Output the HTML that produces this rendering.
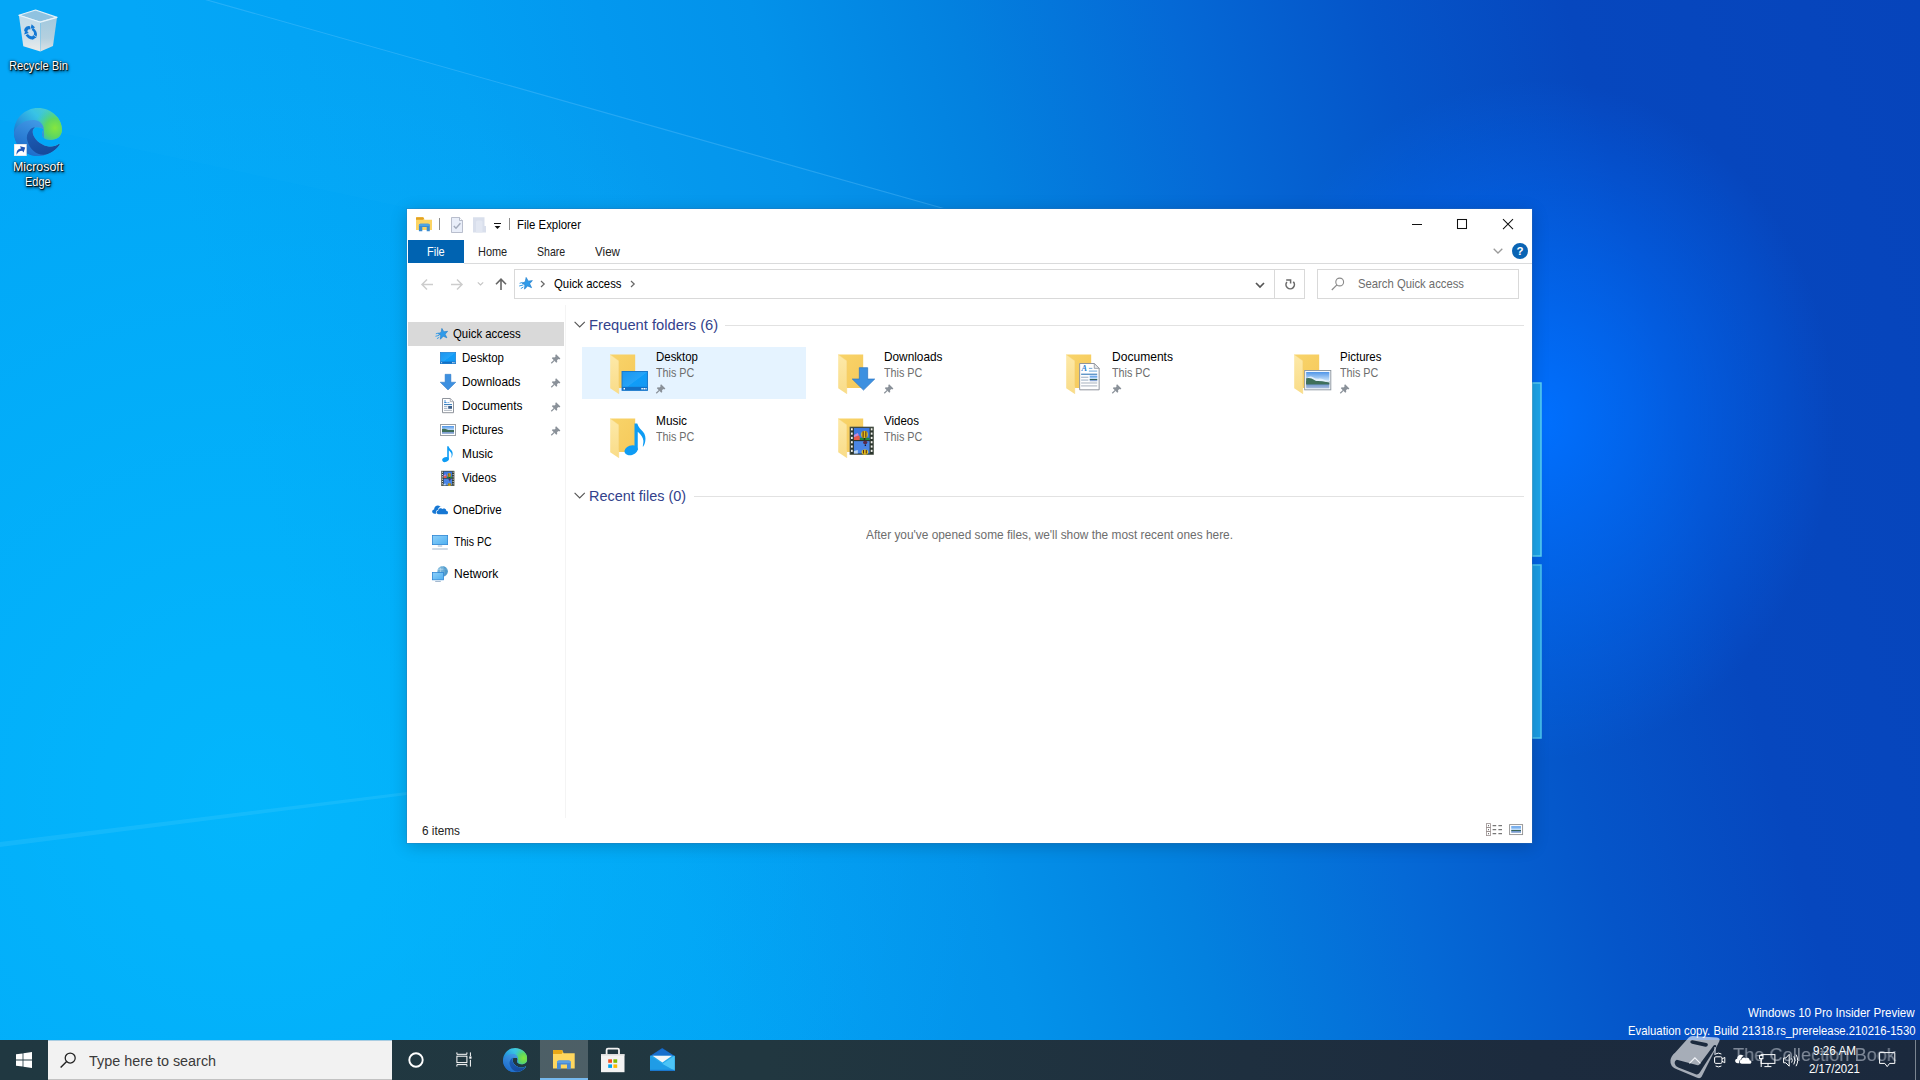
<!DOCTYPE html>
<html><head><meta charset="utf-8"><title>File Explorer</title>
<style>
html,body{margin:0;padding:0;width:1920px;height:1080px;overflow:hidden;background:#0378e0;font-family:"Liberation Sans",sans-serif;}
.a{position:absolute}
.t{position:absolute;white-space:pre;transform-origin:0 0;font-family:"Liberation Sans",sans-serif;}
svg{position:absolute;overflow:visible}
</style></head><body>
<div class=a id=wall style="left:0;top:0;width:1920px;height:1080px;
background:
 radial-gradient(ellipse 300px 340px at 1535px 420px, rgba(0,112,255,1), rgba(0,112,255,0) 100%),
 radial-gradient(ellipse 760px 760px at 250px 800px, rgba(4,192,255,.62), rgba(4,192,255,0) 100%),
 linear-gradient(75deg, #02a6f7 0%, #02a6f7 19%, #02a0f3 33%, #0398ef 40%, #0392ea 47%, #0381df 56%, #0569d6 66%, #0555c9 75%, #0647be 84%, #0644bb 100%);"></div>
<svg style="left:0;top:0" width="1920" height="1080"><polygon points="205,0 209,0 944,208 940,208" fill="rgba(120,205,255,.30)"/><polygon points="207,0 942,208 407,208 0,120 0,0" fill="rgba(60,190,255,.05)"/>
<polygon points="0,842 407,792 407,795 0,847" fill="rgba(150,230,255,.12)"/>
<rect x="1532" y="383" width="9" height="173" fill="#1da6ec" stroke="#59d0f5" stroke-width="1.5"/>
<rect x="1532" y="565" width="9" height="173" fill="#1b9fe8" stroke="#4cc6f2" stroke-width="1.5"/>
</svg>

<svg width="0" height="0" style="left:0;top:0"><defs>
 <linearGradient id="eBase" x1="0.1" y1="0.9" x2="0.9" y2="0.1"><stop offset="0" stop-color="#1560c0"/><stop offset=".45" stop-color="#2a9fe0"/><stop offset=".7" stop-color="#38c3e6"/><stop offset="1" stop-color="#4fd0c0"/></linearGradient>
 <radialGradient id="eGreen" cx="41" cy="20" r="21" gradientUnits="userSpaceOnUse"><stop offset="0" stop-color="#86e63e"/><stop offset=".45" stop-color="#5fd85a" stop-opacity=".95"/><stop offset="1" stop-color="#3fcf9a" stop-opacity="0"/></radialGradient>
 <linearGradient id="eMid" x1="0.6" y1="0" x2="0.2" y2="1"><stop offset="0" stop-color="#3f97e4"/><stop offset="1" stop-color="#1663c4"/></linearGradient>
 <linearGradient id="eDark" x1="0.2" y1="0" x2="0.6" y2="1"><stop offset="0" stop-color="#1d5fb8"/><stop offset="1" stop-color="#16499a"/></linearGradient>
 <clipPath id="eClip"><path d="M24,0 C37.5,0 48,10.5 48,21.5 C48,28.5 42.5,32 36.5,32 C31,32 28,29 28,26.5 C28,24 29.5,23 29,21 C28,19.5 24,19 21,19.5 C18.5,21 18,24 19.5,27.5 C22,33 28,37.5 35,38.5 C39,39 42.5,37.5 44.5,36 C45.5,35.5 46,36.5 45.3,37.3 C41,43.5 33,48 24,48 C10.7,48 0,37.3 0,24 C0,10.7 10.7,0 24,0 Z"/></clipPath>
 <symbol id="edge" viewBox="0 0 48 48" overflow="visible">
  <g clip-path="url(#eClip)">
   <rect x="0" y="0" width="48" height="48" fill="url(#eBase)"/>
   <rect x="0" y="0" width="48" height="48" fill="url(#eGreen)"/>
   <path d="M-1,29 C0,18 9,12 19.5,12 C25,12 29.8,16 29.8,21.5 L30,50 L-1,50 Z" fill="url(#eMid)"/>
   <path d="M16.4,21.2 C13,25 12,29 13.4,33 C15.5,41 22,47 30,46.8 C36,46.5 42,42 45.6,37.3 L47,35 L44.5,36 C42.5,37.5 39,39 35,38.5 C28,37.5 22,33 19.5,27.5 C18,24 18.5,21 21,19.5 C19.5,19.3 17.5,20 16.4,21.2 Z" fill="url(#eDark)"/>
  </g>
 </symbol>
 <linearGradient id="rbL" x1="0" y1="0" x2="0" y2="1"><stop offset="0" stop-color="#c3dcea"/><stop offset=".6" stop-color="#cfe0ea"/><stop offset="1" stop-color="#ebebea"/></linearGradient>
 <linearGradient id="rbR" x1="0" y1="0" x2="0" y2="1"><stop offset="0" stop-color="#a3c9de"/><stop offset=".6" stop-color="#b4d0df"/><stop offset="1" stop-color="#dde2e4"/></linearGradient>
</defs></svg>
<!-- recycle bin -->
<svg style="left:18px;top:9px" width="40" height="44" viewBox="18 9 40 44">
 <path d="M18.9,15.2 L35.6,10 L57,17.4 L40.4,22.2 Z" fill="#8fc2e0" stroke="#e4f1f8" stroke-width="1.2" stroke-linejoin="round"/>
 <path d="M18.9,15.4 L40.4,22.4 L40.4,51.5 L23.3,46.3 Z" fill="url(#rbL)"/>
 <path d="M40.4,22.4 L57,17.6 L53,45.9 L40.4,51.5 Z" fill="url(#rbR)"/>
 <path d="M18.9,15.2 L40.4,22.2 L57,17.4" fill="none" stroke="#eaf4fa" stroke-width="1.2"/>
 <g transform="translate(30.6 32.8) skewY(17)" fill="none" stroke="#1378d4" stroke-width="3.1">
  <circle r="4.9" stroke-dasharray="7.4 2.86" transform="rotate(-70)"/>
 </g>
 <g fill="#1378d4"><path d="M31.6,24.2 L35.2,27.6 L30.6,28.8Z"/><path d="M24.2,34.6 L25.6,29.8 L28.8,33Z"/><path d="M36.6,37.6 L32,39.6 L33,35Z"/></g>

</svg>
<!-- edge -->
<svg style="left:14px;top:108px" width="48" height="48"><use href="#edge" width="48" height="48"/></svg>
<svg style="left:14px;top:143.5px" width="12.5" height="12" viewBox="0 0 12.5 12">
 <rect x="0" y="0" width="12.5" height="12" fill="#fff"/><rect x=".3" y=".3" width="11.9" height="11.4" fill="none" stroke="#d5dde6" stroke-width=".6"/>
 <path d="M2.6,10.8 C2.2,6.6 4.2,4.6 7,4.4 L6,2.2 L11.2,3.4 L9.6,8.6 L8.2,6.8 C5.6,7 3.8,8.2 2.6,10.8Z" fill="#2457b8"/>
</svg>

<div class=a style="left:407px;top:209px;width:1125px;height:634px;background:#fff;box-shadow:0 0 0 1px rgba(60,110,170,.28),0 3px 16px rgba(0,0,0,.20)"></div>
<div class=a style="left:408px;top:240px;width:56px;height:23px;background:#0063b1"></div>
<div class=a style="left:464px;top:263px;width:1068px;height:1px;background:#dadbdc"></div>
<div class=a style="left:514px;top:269px;width:791px;height:30px;border:1px solid #d9d9d9;box-sizing:border-box"></div>
<div class=a style="left:1274px;top:270px;width:1px;height:28px;background:#d9d9d9"></div>
<div class=a style="left:1317px;top:269px;width:202px;height:30px;border:1px solid #d9d9d9;box-sizing:border-box"></div>
<div class=a style="left:408px;top:322px;width:156px;height:23.5px;background:#d9d9d9"></div>
<div class=a style="left:565px;top:305px;width:1px;height:513px;background:#f4f4f4"></div>
<div class=a style="left:582px;top:347px;width:224px;height:52px;background:#e5f3ff"></div>
<div class=a style="left:725px;top:325px;width:799px;height:1px;background:#e2e2e2"></div>
<div class=a style="left:694px;top:496px;width:830px;height:1px;background:#e2e2e2"></div>

<!-- title bar icons -->
<svg style="left:416px;top:217px" width="17" height="15" viewBox="0 0 17 15">
 <path d="M0,1 L0,13 L16,13 L16,2.7 L8.6,2.7 L7.4,0.2 L0.6,0.2 Z" fill="#fcd463"/>
 <path d="M0,0.8 Q0,0.2 .6,.2 L7,.2 L8.2,1.5 L7,2.8 L0,2.8 Z" fill="#e3a221"/>
 <path d="M2.9,14.2 L2.9,8.3 Q2.9,6.8 4.4,6.8 L12.3,6.8 Q13.8,6.8 13.8,8.3 L13.8,14.2 L10.7,14.2 L10.7,10 L6.3,10 L6.3,14.2 Z" fill="#3b8bd0"/>
 <path d="M2.9,8.3 Q2.9,6.8 4.4,6.8 L12.3,6.8 Q13.8,6.8 13.8,8.3 L13.8,9 L2.9,9Z" fill="#4fa3e3"/>
</svg>
<div class=a style="left:439px;top:218px;width:1px;height:12px;background:#8c8c8c"></div>
<svg style="left:451px;top:217px" width="13" height="16" viewBox="0 0 13 16">
 <path d="M.5,.5 L8.5,.5 L11.5,3.5 L11.5,15.5 L.5,15.5 Z" fill="#e9eef9" stroke="#a9b0c0" stroke-width=".8"/>
 <path d="M8.5,.5 L8.5,3.5 L11.5,3.5" fill="#fff" stroke="#a3abbc" stroke-width=".8"/>
 <path d="M2.8,9 L5,11.3 L9.4,6.2" fill="none" stroke="#a3abbc" stroke-width="1.4"/>
</svg>
<svg style="left:473px;top:217px" width="14" height="16" viewBox="0 0 14 16">
 <path d="M0,.3 L11.5,.3 L11.5,9 L13,9 L13,15.6 L0,15.6 Z" fill="#d9dfec"/>
 <path d="M3,15.6 L3,5 Q3,3.5 4.5,3.5 L8,3.5 Q9.5,3.5 9.5,5 L9.5,15.6" fill="#e2e7f2"/>
</svg>
<svg style="left:494px;top:223px" width="8" height="7" viewBox="0 0 8 7"><rect x="0" y="0" width="7" height="1" fill="#111"/><path d="M.6,3 L6.4,3 L3.5,6 Z" fill="#111"/></svg>
<div class=a style="left:509px;top:218px;width:1px;height:12px;background:#8c8c8c"></div>
<!-- window controls -->
<svg style="left:1412px;top:219px" width="102" height="11" viewBox="0 0 102 11" fill="none" stroke="#111" stroke-width="1.05">
 <path d="M0,5.5 L10,5.5"/>
 <rect x="45.5" y=".5" width="9" height="9"/>
 <path d="M91,.2 L101,10.2 M101,.2 L91,10.2"/>
</svg>
<!-- ribbon right -->
<svg style="left:1493px;top:248px" width="10" height="6" viewBox="0 0 10 6"><path d="M.7,.7 L5,5 L9.3,.7" fill="none" stroke="#9a9a9a" stroke-width="1.3"/></svg>
<svg style="left:1512px;top:243px" width="16" height="16" viewBox="0 0 16 16"><circle cx="8" cy="8" r="8" fill="#0a64b4"/><text x="8" y="12.2" text-anchor="middle" font-family="Liberation Sans" font-weight="700" font-size="11.5" fill="#fff">?</text></svg>
<!-- nav arrows -->
<svg style="left:421px;top:278px" width="90" height="13" viewBox="0 0 90 13" fill="none" stroke-width="1.3">
 <path d="M6,1.5 L1,6.5 L6,11.5 M1,6.5 L12,6.5" stroke="#cdcdcd" stroke-width="1.5"/>
 <path d="M36,1.5 L41,6.5 L36,11.5 M41,6.5 L30,6.5" stroke="#cdcdcd" stroke-width="1.5"/>
 <path d="M56.8,4.3 L59.5,7 L62.2,4.3" stroke="#c4c4c4" stroke-width="1.1"/>
 <path d="M75,6.2 L80,1.2 L85,6.2 M80,1.2 L80,12" stroke="#666" stroke-width="1.6"/>
</svg>
<!-- address bar -->
<svg style="left:519px;top:277px" width="14" height="13" viewBox="0 0 14 13" id="star1">
 <path transform="rotate(-10 8.5 6.5)" d="M8.2,.3 L9.7,4.3 L13.8,4.5 L10.6,7.1 L11.8,11.3 L8.2,8.9 L4.6,11.6 L5.7,7.3 L3.2,5.2 L6.6,4.4 Z" fill="#2f9bea" stroke="#1a78c9" stroke-width=".6"/>
 <path d="M.6,6.3 L3.6,5.4 M.2,9 L4.4,7.9 M1.8,11.6 L4.4,10" stroke="#2f9bea" stroke-width="1" fill="none"/>
</svg>
<svg style="left:540px;top:280px" width="6" height="8" viewBox="0 0 6 8"><path d="M1,1 L4.2,4 L1,7" fill="none" stroke="#666" stroke-width="1.2"/></svg>
<svg style="left:630px;top:280px" width="6" height="8" viewBox="0 0 6 8"><path d="M1,1 L4.2,4 L1,7" fill="none" stroke="#666" stroke-width="1.2"/></svg>
<svg style="left:1255px;top:282px" width="10" height="7" viewBox="0 0 10 7"><path d="M1,1 L5,5 L9,1" fill="none" stroke="#555" stroke-width="1.7"/></svg>
<svg style="left:1284px;top:278px" width="12" height="13" viewBox="0 0 12 13"><path d="M9.3,3.8 A4.2,4.2 0 1 1 2.9,4.0" fill="none" stroke="#6a6a6a" stroke-width="1.6"/><path d="M2.2,2.1 L6.6,2.1 L6.6,5.6" fill="none" stroke="#6a6a6a" stroke-width="1.5"/></svg>
<svg style="left:1331px;top:277px" width="14" height="14" viewBox="0 0 14 14"><circle cx="8.7" cy="5" r="3.9" fill="none" stroke="#8a8a8a" stroke-width="1.1"/><path d="M5.9,7.9 L.8,13" stroke="#8a8a8a" stroke-width="1.2"/></svg>
<!-- section chevrons -->
<svg style="left:574px;top:321px" width="12" height="8" viewBox="0 0 12 8"><path d="M.6,.8 L5.7,6 L10.8,.8" fill="none" stroke="#555" stroke-width="1.1"/></svg>
<svg style="left:574px;top:492px" width="12" height="8" viewBox="0 0 12 8"><path d="M.6,.8 L5.7,6 L10.8,.8" fill="none" stroke="#555" stroke-width="1.1"/></svg>
<!-- defs -->
<svg width="0" height="0" style="left:0;top:0">
 <defs>
  <linearGradient id="gFolderBack" x1="0" y1="0" x2="1" y2="1"><stop offset="0" stop-color="#f8d46a"/><stop offset="1" stop-color="#f6c95b"/></linearGradient>
  <linearGradient id="gFolderFlap" x1="0" y1="0" x2="0" y2="1"><stop offset="0" stop-color="#fde9a8"/><stop offset="1" stop-color="#f9dc88"/></linearGradient>
  <linearGradient id="gDesk" x1="0" y1="0" x2="1" y2="1"><stop offset="0" stop-color="#1c95ee"/><stop offset=".5" stop-color="#25a4f8"/><stop offset=".52" stop-color="#0f9df8"/><stop offset="1" stop-color="#1896f0"/></linearGradient>
  <linearGradient id="gSky" x1="0" y1="0" x2="0" y2="1"><stop offset="0" stop-color="#4f95e8"/><stop offset=".55" stop-color="#cfe6fa"/><stop offset=".56" stop-color="#3e6e5c"/><stop offset=".72" stop-color="#2f5a55"/><stop offset=".74" stop-color="#6f95cf"/><stop offset="1" stop-color="#a9bddb"/></linearGradient>
  <linearGradient id="gMon" x1="0" y1="0" x2="1" y2="1"><stop offset="0" stop-color="#8ed0fa"/><stop offset="1" stop-color="#4fb0f0"/></linearGradient>
  <symbol id="folder" viewBox="0 0 40 41" overflow="visible">
   <path d="M.4,.4 L25.2,.4 L25.2,34 L8.7,34 Z" fill="url(#gFolderBack)"/>
   <path d="M.2,.5 L8.8,6.8 L8.8,39.9 L.2,34.2 Z" fill="url(#gFolderFlap)"/>
   <path d="M.2,.5 L8.8,6.8 L8.8,39.9" fill="none" stroke="#f3d27c" stroke-width=".5" opacity=".7"/>
  </symbol>
  <symbol id="pin" viewBox="0 0 10 10" overflow="visible">
   <path d="M5.3,.2 L9.8,4.7 L8.6,5.6 L7.6,5.1 L6.3,6.4 L6.5,8.3 L5.5,9.1 L.9,4.5 L1.7,3.5 L3.6,3.7 L4.9,2.4 L4.4,1.4 Z" fill="#8a9199"/>
   <path d="M3.4,6.6 L.3,9.7" stroke="#8a9199" stroke-width="1.3"/>
  </symbol>
  <symbol id="deskico" viewBox="0 0 16 12" overflow="visible">
   <rect x=".3" y=".3" width="15.4" height="11.4" fill="url(#gDesk)" stroke="#1878cc" stroke-width=".6"/>
   <rect x=".3" y="9.6" width="15.4" height="2.1" fill="#126fc4"/>
   <rect x="1.2" y="10.3" width=".9" height=".9" fill="#fff"/><rect x="12" y="10.3" width=".9" height=".9" fill="#fff"/><rect x="13.3" y="10.3" width=".9" height=".9" fill="#fff"/><rect x="14.5" y="10.3" width=".7" height=".9" fill="#fff"/>
  </symbol>
  <symbol id="dlarrow" viewBox="0 0 16 16" overflow="visible">
   <path d="M5.1,.3 L10.9,.3 L10.9,8.2 L15.8,8.2 L8,15.9 L.2,8.2 L5.1,8.2 Z" fill="#3d90e0" stroke="#2b77c4" stroke-width=".5"/>
  </symbol>
  <symbol id="docico" viewBox="0 0 21 28" overflow="visible">
   <path d="M.5,.5 L15.5,.5 L20.5,5.5 L20.5,27.5 L.5,27.5 Z" fill="#fff" stroke="#8d929b" stroke-width="1"/>
   <path d="M15.5,.5 L15.5,5.5 L20.5,5.5 Z" fill="#e9ebee" stroke="#8d929b" stroke-width=".8"/>
   <text x="2.3" y="8.6" font-family="Liberation Serif" font-style="italic" font-weight="700" font-size="8.5" fill="#2b7fd0">A</text>
   <path d="M10,5.5 L13.5,5.5 M10,8.3 L18.5,8.3" stroke="#5b9bd5" stroke-width=".9"/>
   <path d="M2,11.5 L18.5,11.5" stroke="#2e75b6" stroke-width="1.1"/>
   <path d="M2,14.6 L9.5,14.6 M2,17.5 L9.5,17.5" stroke="#8aa0b8" stroke-width=".9"/>
   <path d="M2,20.5 L18.5,20.5 M2,23.5 L18.5,23.5" stroke="#9aa5b3" stroke-width=".9"/>
   <rect x="10.8" y="13" width="7.8" height="5.8" fill="url(#gSky)"/>
  </symbol>
  <symbol id="picico" viewBox="0 0 28 21" overflow="visible">
   <rect x=".5" y=".5" width="27" height="20" fill="#fff" stroke="#8e98a2" stroke-width="1"/>
   <rect x="2" y="2" width="24" height="17" fill="url(#gSky)"/>
   <path d="M2,9 Q6,5.5 9,7.5 T15,9 T22,10.5 L26,11.5 L26,13 L2,9.5Z" fill="#e8f3fc" opacity=".9"/>
   <path d="M2,8.5 Q7,7.5 10,10 T17,12 T26,14 L26,15 L2,15Z" fill="#3f6f5a"/>
  </symbol>
  <symbol id="noteico" viewBox="0 0 440 645" overflow="visible">
   <ellipse cx="142" cy="545" rx="137" ry="96" transform="rotate(-20 142 545)" fill="#0e9cf4"/>
   <path d="M210,540 L210,10 L265,10 C285,85 340,130 380,175 C425,225 438,295 425,365 C418,410 400,450 378,482 C372,450 392,400 388,355 C382,290 345,240 275,175 L275,540 Z" fill="#0e9cf4"/>
  </symbol>
  <symbol id="filmico" viewBox="0 0 24 28" overflow="visible">
   <rect x="0" y="0" width="24" height="28" fill="#2b352d"/>
   <rect x="0" y="0" width="24" height="28" fill="none" stroke="#565e52" stroke-width=".8"/>
   <rect x="4" y="1" width="16" height="12.2" fill="#3d78e0"/>
   <rect x="4" y="14.4" width="16" height="12.6" fill="#4a86e6"/>
   <path d="M4,10.3 L8.5,8.2 L10,10 L10,13.2 L4,13.2Z" fill="#e85a4a"/><path d="M4,8.2 L8,6 L9,8.5 L4,10.5Z" fill="#c98ad8"/>
   <path d="M10,11 L20,11 L20,13.2 L10,13.2Z" fill="#1f8a3c"/>
   <ellipse cx="14.8" cy="7.6" rx="3.4" ry="3.8" fill="#e2c11f"/><path d="M13.4,4.2 L13.4,11 M16.2,4.2 L16.2,11" stroke="#5a2a10" stroke-width="1.1"/>
   <rect x="14" y="11.3" width="1.6" height="1.6" fill="#2a1a0a"/>
   <ellipse cx="15.5" cy="15.8" rx="2.2" ry="1.8" fill="#5a2a4a"/><rect x="15" y="17.8" width="1.4" height="1.6" fill="#201a2a"/>
   <ellipse cx="15.2" cy="25.6" rx="3.4" ry="2.6" fill="#e2c11f"/><path d="M13.8,23.4 L13.8,27 M16.6,23.4 L16.6,27" stroke="#5a2a10" stroke-width="1.1"/>
   <path d="M4,24.5 L8,23.5 L8,27 L4,27Z" fill="#b9d3f0"/>
   <g fill="#f3f3ee"><rect x="1" y="1.2" width="1.8" height="2.2"/><rect x="1" y="5.6" width="1.8" height="2.2"/><rect x="1" y="10" width="1.8" height="2.2"/><rect x="1" y="14.4" width="1.8" height="2.2"/><rect x="1" y="18.8" width="1.8" height="2.2"/><rect x="1" y="23.2" width="1.8" height="2.2"/>
   <rect x="21.2" y="1.2" width="1.8" height="2.2"/><rect x="21.2" y="5.6" width="1.8" height="2.2"/><rect x="21.2" y="10" width="1.8" height="2.2"/><rect x="21.2" y="14.4" width="1.8" height="2.2"/><rect x="21.2" y="18.8" width="1.8" height="2.2"/><rect x="21.2" y="23.2" width="1.8" height="2.2"/></g>
  </symbol>
 </defs>
</svg>
<!-- nav pane icons -->
<svg style="left:434.5px;top:328px" width="13.5" height="12" viewBox="0 0 14 13">
 <path transform="rotate(-10 8.5 6.5)" d="M8.2,.3 L9.7,4.3 L13.8,4.5 L10.6,7.1 L11.8,11.3 L8.2,8.9 L4.6,11.6 L5.7,7.3 L3.2,5.2 L6.6,4.4 Z" fill="#2f9bea" stroke="#1a78c9" stroke-width=".6"/>
 <path d="M.6,6.3 L3.6,5.4 M.2,9 L4.4,7.9 M1.8,11.6 L4.4,10" stroke="#2f9bea" stroke-width="1" fill="none"/>
</svg>
<svg style="left:440px;top:352px" width="16" height="12"><use href="#deskico" width="16" height="12"/></svg>
<svg style="left:440px;top:374px" width="16" height="16"><use href="#dlarrow" width="16" height="16"/></svg>
<svg style="left:442.3px;top:398.3px" width="12" height="15.2" viewBox="0 0 12 15.2">
 <path d="M.5,.5 L8.3,.5 L11.5,3.7 L11.5,14.7 L.5,14.7 Z" fill="#fff" stroke="#8f949c" stroke-width="1"/>
 <path d="M8.3,.5 L8.3,3.7 L11.5,3.7" fill="#eef0f2" stroke="#8f949c" stroke-width=".7"/>
 <path d="M2.2,3 L3.8,3 M2.2,4.6 L4.6,4.6" stroke="#2b7fd0" stroke-width="1"/><path d="M5.4,4.6 L7.4,4.6" stroke="#5b9bd5" stroke-width=".8"/>
 <path d="M2,6.6 L10,6.6" stroke="#2e75b6" stroke-width="1"/>
 <path d="M2,8.6 L5.4,8.6 M2,10.4 L5.4,10.4" stroke="#8aa0b8" stroke-width=".8"/><rect x="6.2" y="8" width="3.8" height="2.8" fill="#3b5f8a"/>
 <path d="M2,12.4 L10,12.4" stroke="#9aa5b3" stroke-width=".8"/>
</svg>
<svg style="left:440px;top:424px" width="16" height="12" viewBox="0 0 16 12">
 <rect x=".5" y=".5" width="15" height="11" fill="#fff" stroke="#9aa0a6" stroke-width="1"/>
 <rect x="2" y="2" width="12" height="8" fill="url(#gSky)"/>
 <path d="M2,5 Q5,4.2 7,5.6 T14,7.6 L14,8 L2,8Z" fill="#3f6f5a"/>
</svg>
<svg style="left:442.4px;top:446px" width="10.9" height="16"><use href="#noteico" width="10.9" height="16"/></svg>
<svg style="left:441.2px;top:471px" width="13.6" height="14.8"><use href="#filmico" width="13.6" height="14.8"/></svg>
<!-- pins nav -->
<svg style="left:550.7px;top:353.6px" width="9.6" height="9.6"><use href="#pin" width="9.6" height="9.6"/></svg>
<svg style="left:550.7px;top:377.6px" width="9.6" height="9.6"><use href="#pin" width="9.6" height="9.6"/></svg>
<svg style="left:550.7px;top:401.6px" width="9.6" height="9.6"><use href="#pin" width="9.6" height="9.6"/></svg>
<svg style="left:550.7px;top:425.6px" width="9.6" height="9.6"><use href="#pin" width="9.6" height="9.6"/></svg>
<!-- onedrive / this pc / network -->
<svg style="left:432px;top:505.3px" width="16.4" height="9.6" viewBox="0 0 33 19">
 <path d="M13.5,18.6 C8,18.6 7.6,11.6 12.6,10.9 C12.8,6.4 18.6,4.6 21.2,8 C24.6,5.6 29,8 28.6,11.6 C33.4,11.8 33.6,18.6 28.6,18.6 Z" fill="#1677d3"/>
 <path d="M5.6,17.6 C-1,17.6 -1.4,9.4 4.4,9 C3.6,2.6 11.8,-1.8 16.4,3 C17.4,2.4 18.4,2.2 19.4,2.2 C17,2.4 12.6,4.6 12,9.6 C8,10.8 7,14.6 8.6,17.6Z" fill="#1677d3"/>
</svg>
<svg style="left:432px;top:535.3px" width="16" height="15" viewBox="0 0 16 15">
 <rect x=".4" y=".4" width="15.2" height="9.2" fill="url(#gMon)" stroke="#2e86d4" stroke-width=".8"/>
 <path d="M5.8,11 L10.2,11" stroke="#8fa9c4" stroke-width=".9"/><path d="M.2,14 L15.8,14" stroke="#9fb6cd" stroke-width="1"/>
</svg>
<svg style="left:432px;top:566px" width="16.4" height="16.4" viewBox="0 0 16.4 16.4">
 <circle cx="10.6" cy="5.2" r="5.2" fill="#6fb0d8"/><path d="M7.5,1.2 C9.5,3 9,6 6.6,8.4 M10.6,0 C12.6,2 13,7 11,10.2 M6,3.2 L15.4,3.2" stroke="#c9e4f4" stroke-width=".7" fill="none"/>
 <path d="M11,.2 C14,1 15.8,3.4 15.8,5.4 C15.8,8 14,10 12,10.4" fill="#3b8cc4" opacity=".6"/>
 <rect x=".4" y="6.6" width="11.2" height="7.2" fill="url(#gMon)" stroke="#2e86d4" stroke-width=".8"/>
 <path d="M3.2,15.4 L8.8,15.4" stroke="#8fa9c4" stroke-width=".9"/>
</svg>

<svg style="left:610px;top:354px" width="40" height="41"><use href="#folder" width="40" height="41"/></svg>
<svg style="left:621.3px;top:371px" width="27.5" height="19.8"><use href="#deskico" width="27.5" height="19.8"/></svg>
<svg style="left:656.2px;top:383.5px" width="9.6" height="9.6"><use href="#pin" width="9.6" height="9.6"/></svg>
<svg style="left:838px;top:354px" width="40" height="41"><use href="#folder" width="40" height="41"/></svg>
<svg style="left:852px;top:367.3px" width="23" height="23.5"><use href="#dlarrow" width="23" height="23.5"/></svg>
<svg style="left:884.2px;top:383.5px" width="9.6" height="9.6"><use href="#pin" width="9.6" height="9.6"/></svg>
<svg style="left:1066px;top:354px" width="40" height="41"><use href="#folder" width="40" height="41"/></svg>
<svg style="left:1079.3px;top:363.3px" width="20.8" height="27.3"><use href="#docico" width="20.8" height="27.3"/></svg>
<svg style="left:1112.2px;top:383.5px" width="9.6" height="9.6"><use href="#pin" width="9.6" height="9.6"/></svg>
<svg style="left:1294px;top:354px" width="40" height="41"><use href="#folder" width="40" height="41"/></svg>
<svg style="left:1304.3px;top:370.3px" width="27.5" height="20.3"><use href="#picico" width="27.5" height="20.3"/></svg>
<svg style="left:1340.2px;top:383.5px" width="9.6" height="9.6"><use href="#pin" width="9.6" height="9.6"/></svg>
<svg style="left:610px;top:418px" width="40" height="41"><use href="#folder" width="40" height="41"/></svg>
<svg style="left:623.5px;top:422.75px" width="22" height="32.25"><use href="#noteico" width="22" height="32.25"/></svg>
<svg style="left:838px;top:418px" width="40" height="41"><use href="#folder" width="40" height="41"/></svg>
<svg style="left:850.3px;top:427.3px" width="23.5" height="27.5"><use href="#filmico" width="23.5" height="27.5"/></svg>
<div class=a style="left:0;top:1040px;width:1920px;height:40px;background:linear-gradient(90deg,#203841 0%,#213740 40%,#1e2f3f 65%,#1c2b3e 80%,#1b293d 100%)"></div>
<div class=a style="left:48px;top:1040px;width:344px;height:40px;background:#f2f2f2;border-top:1px solid #a9cde2;border-bottom:1px solid #c2c2c2;box-sizing:border-box"></div>
<div class=a style="left:540px;top:1040px;width:48px;height:40px;background:rgba(255,255,255,.2)"></div>
<div class=a style="left:540px;top:1078px;width:48px;height:2px;background:#76b9ed"></div>
<div class=a style="left:1915px;top:1040px;width:1px;height:40px;background:#7b8591"></div>
<!-- start -->
<svg style="left:16px;top:1052px" width="16" height="16" viewBox="0 0 16 16" fill="#fff">
 <path d="M0,2.3 L6.6,1.4 L6.6,7.6 L0,7.6 Z M7.4,1.3 L16,0 L16,7.6 L7.4,7.6 Z M0,8.4 L6.6,8.4 L6.6,14.6 L0,13.7 Z M7.4,8.4 L16,8.4 L16,16 L7.4,14.7 Z"/>
</svg>
<!-- search glass -->
<svg style="left:60px;top:1052px" width="17" height="17" viewBox="0 0 17 17"><circle cx="10.2" cy="6" r="5" fill="none" stroke="#222" stroke-width="1.25"/><path d="M6.6,9.6 L.6,15.6" stroke="#222" stroke-width="1.4"/></svg>
<!-- cortana -->
<svg style="left:408px;top:1052px" width="16" height="16" viewBox="0 0 16 16"><circle cx="8" cy="8" r="6.7" fill="none" stroke="#fff" stroke-width="1.9"/></svg>
<!-- task view -->
<svg style="left:456px;top:1052px" width="17" height="15" viewBox="0 0 17 15" fill="none" stroke="#fff" stroke-width="1">
 <rect x=".9" y="4.2" width="10" height="6.4"/>
 <path d="M.9,.4 L.9,2.3 L10.9,2.3 L10.9,.4 M.9,14.6 L.9,12.6 L10.9,12.6 L10.9,14.6"/>
 <path d="M14.4,.4 L14.4,4 M14.4,7.8 L14.4,14.6"/>
 <rect x="13.3" y="4.4" width="2.2" height="2.3" fill="#fff" stroke="none"/>
</svg>
<!-- edge small -->
<svg style="left:503px;top:1048px" width="24.3" height="24.3"><use href="#edge" width="24.3" height="24.3"/></svg>
<!-- explorer -->
<svg style="left:553px;top:1049.7px" width="22" height="19.5" viewBox="0 0 22 19.5">
 <path d="M0,1.2 L0,18.6 L21.7,18.6 L21.7,3.2 L10.6,3.2 L9.2,0 L1,0 Q0,0 0,1.2 Z" fill="#ffd75e"/>
 <path d="M0,1.2 Q0,0 1,0 L8.6,0 L10,1.8 L8.6,4 L0,4 Z" fill="#e9a816"/>
 <path d="M4,19.3 L4,12.4 Q4,10.4 6,10.4 L15.8,10.4 Q17.8,10.4 17.8,12.4 L17.8,19.3 L14,19.3 L14,14.4 L7.8,14.4 L7.8,19.3 Z" fill="#4a8ad4"/>
 <path d="M4,12.4 Q4,10.4 6,10.4 L15.8,10.4 Q17.8,10.4 17.8,12.4 L17.8,13 L4,13 Z" fill="#5c9fe2"/>
</svg>
<!-- store -->
<svg style="left:600.7px;top:1047.8px" width="23.5" height="24.3" viewBox="0 0 23.5 24.3">
 <path d="M5.6,8 L5.6,2 Q5.6,.6 7,.6 L16.6,.6 Q18,.6 18,2 L18,8" fill="none" stroke="#f2f2f2" stroke-width="1.8"/>
 <rect x="0" y="6.2" width="23.5" height="18" fill="#f3f3f3"/>
 <rect x="0" y="6.2" width="23.5" height="1.4" fill="#e2e2e2"/>
 <rect x="7.2" y="11.3" width="3.8" height="3.5" fill="#f25022"/><rect x="12.4" y="11.3" width="3.8" height="3.5" fill="#7fba00"/>
 <rect x="7.2" y="16.4" width="3.8" height="3.5" fill="#00a4ef"/><rect x="12.4" y="16.4" width="3.8" height="3.5" fill="#ffb900"/>
</svg>
<!-- mail -->
<svg style="left:649.8px;top:1048.2px" width="24.6" height="23" viewBox="0 0 24.6 23">
 <path d="M0,8 L12.2,0 L24.6,8 Z" fill="#1464c0"/>
 <path d="M.2,8 L12.2,.8 L24.4,8 Z" fill="#1b74d4" opacity=".6"/>
 <rect x="0" y="7.8" width="24.6" height="15" fill="#28a8ea"/>
 <path d="M2.6,7.8 L22,7.8 L12.4,14.4 Z" fill="#f4f6f8"/>
 <path d="M0,7.8 L12.3,16 L24.6,7.8 L24.6,22.8 L0,22.8 Z" fill="#2aabee"/>
 <path d="M12.3,16 L24.6,7.8 L24.6,22.8 Z" fill="#4cc4f6"/>
 <path d="M0,7.8 L12.3,16 L24.6,22.8 L0,22.8Z" fill="#1f9ce6"/>
 <rect x="0" y="21.8" width="24.6" height="1.2" fill="#1a78cf"/>
</svg>
<!-- tray -->
<svg style="left:1689px;top:1056.5px" width="12" height="7" viewBox="0 0 12 7"><path d="M.4,6.3 L5.9,.8 L11.4,6.3" fill="none" stroke="#fff" stroke-width="1.1"/></svg>
<svg style="left:1714px;top:1052px" width="12" height="16" viewBox="0 0 12 16" fill="none" stroke="#fff" stroke-width="1">
 <rect x=".6" y="4.8" width="7.4" height="6.6" rx="1.2"/><path d="M8,7 L10.8,5.4 L10.8,10.8 L8,9.2"/>
 <path d="M1.6,2 Q4.4,.2 7.4,2 M1.6,14 Q4.4,15.8 7.4,14"/>
</svg>
<svg style="left:1734.6px;top:1053.8px" width="16.8" height="10.2" viewBox="0 0 33 19">
 <path d="M13.5,18.6 C8,18.6 7.6,11.6 12.6,10.9 C12.8,6.4 18.6,4.6 21.2,8 C24.6,5.6 29,8 28.6,11.6 C33.4,11.8 33.6,18.6 28.6,18.6 Z" fill="#fff"/>
 <path d="M5.6,17.6 C-1,17.6 -1.4,9.4 4.4,9 C3.6,2.6 11.8,-1.8 16.4,3 C17.4,2.4 18.4,2.2 19.4,2.2 C17,2.4 12.6,4.6 12,9.6 C8,10.8 7,14.6 8.6,17.6Z" fill="#fff"/>
</svg>
<svg style="left:1759px;top:1054px" width="17" height="14" viewBox="0 0 17 14" fill="none" stroke="#fff" stroke-width="1">
 <rect x="2.1" y=".6" width="13.8" height="8.8"/><path d="M9,9.4 L9,12.4 M5.4,12.6 L12.4,12.6"/>
 <rect x=".5" y="1.4" width="3.4" height="3.2" fill="#1d2c3e"/><path d="M2.2,4.6 L2.2,13"/>
</svg>
<svg style="left:1782.5px;top:1053px" width="17" height="15" viewBox="0 0 17 15" fill="none" stroke="#fff" stroke-width="1">
 <path d="M.6,5 L2.8,5 L6.2,1.4 L6.2,13.2 L2.8,9.8 L.6,9.8 Z"/>
 <path d="M8.6,5.2 Q10,7.4 8.6,9.6 M10.8,3.4 Q13.2,7.4 10.8,11.4 M13,1.6 Q16.4,7.4 13,13.2"/>
</svg>
<svg style="left:1879px;top:1052px" width="17" height="17" viewBox="0 0 17 17" fill="none" stroke="#fff" stroke-width="1"><path d="M.6,.6 L15.8,.6 L15.8,11.4 L10.6,11.4 L8.2,14.6 L5.8,11.4 L.6,11.4 Z"/></svg>

<span class=t style="left:517.00px;top:217px;font-size:12.19px;line-height:16px;transform:scaleX(0.9356);color:#000;font-weight:400;">File Explorer</span><span class=t style="left:427.30px;top:244px;font-size:12.19px;line-height:16px;transform:scaleX(0.9012);color:#fff;font-weight:400;">File</span><span class=t style="left:478.30px;top:244px;font-size:12.19px;line-height:16px;transform:scaleX(0.8980);color:#222;font-weight:400;">Home</span><span class=t style="left:537.30px;top:244px;font-size:12.19px;line-height:16px;transform:scaleX(0.8669);color:#222;font-weight:400;">Share</span><span class=t style="left:595.00px;top:244px;font-size:12.19px;line-height:16px;transform:scaleX(0.9541);color:#222;font-weight:400;">View</span><span class=t style="left:554.00px;top:276px;font-size:12.19px;line-height:16px;transform:scaleX(0.9312);color:#000;font-weight:400;">Quick access</span><span class=t style="left:1358.00px;top:276px;font-size:12.19px;line-height:16px;transform:scaleX(0.9259);color:#6d6d6d;font-weight:400;">Search Quick access</span><span class=t style="left:453.30px;top:326px;font-size:12.19px;line-height:16px;transform:scaleX(0.9340);color:#000;font-weight:400;">Quick access</span><span class=t style="left:461.50px;top:350px;font-size:12.19px;line-height:16px;transform:scaleX(0.9392);color:#000;font-weight:400;">Desktop</span><span class=t style="left:461.50px;top:374px;font-size:12.19px;line-height:16px;transform:scaleX(0.9702);color:#000;font-weight:400;">Downloads</span><span class=t style="left:461.50px;top:398px;font-size:12.19px;line-height:16px;transform:scaleX(0.9815);color:#000;font-weight:400;">Documents</span><span class=t style="left:461.50px;top:422px;font-size:12.19px;line-height:16px;transform:scaleX(0.9380);color:#000;font-weight:400;">Pictures</span><span class=t style="left:461.50px;top:446px;font-size:12.19px;line-height:16px;transform:scaleX(0.9740);color:#000;font-weight:400;">Music</span><span class=t style="left:461.50px;top:470px;font-size:12.19px;line-height:16px;transform:scaleX(0.9259);color:#000;font-weight:400;">Videos</span><span class=t style="left:453.30px;top:502px;font-size:12.19px;line-height:16px;transform:scaleX(0.9459);color:#000;font-weight:400;">OneDrive</span><span class=t style="left:453.80px;top:534px;font-size:12.19px;line-height:16px;transform:scaleX(0.8698);color:#000;font-weight:400;">This PC</span><span class=t style="left:453.80px;top:566px;font-size:12.19px;line-height:16px;transform:scaleX(0.9887);color:#000;font-weight:400;">Network</span><span class=t style="left:589.30px;top:315px;font-size:15.48px;line-height:20px;transform:scaleX(0.9511);color:#33428c;font-weight:400;">Frequent folders (6)</span><span class=t style="left:589.30px;top:486px;font-size:15.48px;line-height:20px;transform:scaleX(0.9343);color:#33428c;font-weight:400;">Recent files (0)</span><span class=t style="left:655.50px;top:349px;font-size:12.19px;line-height:16px;transform:scaleX(0.9392);color:#000;font-weight:400;">Desktop</span><span class=t style="left:655.50px;top:365px;font-size:12.19px;line-height:16px;transform:scaleX(0.8836);color:#6d6d6d;font-weight:400;">This PC</span><span class=t style="left:883.50px;top:349px;font-size:12.19px;line-height:16px;transform:scaleX(0.9702);color:#000;font-weight:400;">Downloads</span><span class=t style="left:883.50px;top:365px;font-size:12.19px;line-height:16px;transform:scaleX(0.8836);color:#6d6d6d;font-weight:400;">This PC</span><span class=t style="left:1111.50px;top:349px;font-size:12.19px;line-height:16px;transform:scaleX(0.9896);color:#000;font-weight:400;">Documents</span><span class=t style="left:1111.50px;top:365px;font-size:12.19px;line-height:16px;transform:scaleX(0.8836);color:#6d6d6d;font-weight:400;">This PC</span><span class=t style="left:1339.50px;top:349px;font-size:12.19px;line-height:16px;transform:scaleX(0.9425);color:#000;font-weight:400;">Pictures</span><span class=t style="left:1339.50px;top:365px;font-size:12.19px;line-height:16px;transform:scaleX(0.8836);color:#6d6d6d;font-weight:400;">This PC</span><span class=t style="left:655.50px;top:413px;font-size:12.19px;line-height:16px;transform:scaleX(0.9740);color:#000;font-weight:400;">Music</span><span class=t style="left:655.50px;top:429px;font-size:12.19px;line-height:16px;transform:scaleX(0.8836);color:#6d6d6d;font-weight:400;">This PC</span><span class=t style="left:883.50px;top:413px;font-size:12.19px;line-height:16px;transform:scaleX(0.9447);color:#000;font-weight:400;">Videos</span><span class=t style="left:883.50px;top:429px;font-size:12.19px;line-height:16px;transform:scaleX(0.8836);color:#6d6d6d;font-weight:400;">This PC</span><span class=t style="left:866.00px;top:527px;font-size:12.19px;line-height:16px;transform:scaleX(0.9746);color:#6d6d6d;font-weight:400;">After you've opened some files, we'll show the most recent ones here.</span><span class=t style="left:422.00px;top:823px;font-size:12.19px;line-height:16px;transform:scaleX(0.9670);color:#222;font-weight:400;">6 items</span><span class=t style="left:88.50px;top:1051px;font-size:15.26px;line-height:20px;transform:scaleX(0.9429);color:#3a3a3a;font-weight:400;">Type here to search</span><span class=t style="left:1813.00px;top:1043px;font-size:12.19px;line-height:16px;transform:scaleX(0.9616);color:#fff;font-weight:400;">9:26 AM</span><span class=t style="left:1809.00px;top:1061px;font-size:12.19px;line-height:16px;transform:scaleX(0.9404);color:#fff;font-weight:400;">2/17/2021</span><span class=t style="left:1748.40px;top:1005px;font-size:12.19px;line-height:16px;transform:scaleX(0.9496);color:#fff;font-weight:400;">Windows 10 Pro Insider Preview</span><span class=t style="left:1627.50px;top:1023px;font-size:12.19px;line-height:16px;transform:scaleX(0.9292);color:#fff;font-weight:400;">Evaluation copy. Build 21318.rs_prerelease.210216-1530</span><span class=t style="left:8.90px;top:58px;font-size:12.19px;line-height:16px;transform:scaleX(0.9152);color:#fff;font-weight:400;text-shadow:1px 1px 1px rgba(0,0,0,.95),0 0 3px rgba(0,0,0,.75),1px 2px 3px rgba(0,0,0,.7),0 0 1px rgba(0,0,0,.8);">Recycle Bin</span><span class=t style="left:12.80px;top:159px;font-size:12.19px;line-height:16px;transform:scaleX(1.0154);color:#fff;font-weight:400;text-shadow:1px 1px 1px rgba(0,0,0,.95),0 0 3px rgba(0,0,0,.75),1px 2px 3px rgba(0,0,0,.7),0 0 1px rgba(0,0,0,.8);">Microsoft</span><span class=t style="left:24.60px;top:174px;font-size:12.19px;line-height:16px;transform:scaleX(0.8992);color:#fff;font-weight:400;text-shadow:1px 1px 1px rgba(0,0,0,.95),0 0 3px rgba(0,0,0,.75),1px 2px 3px rgba(0,0,0,.7),0 0 1px rgba(0,0,0,.8);">Edge</span><span class=t style="left:1732.50px;top:1043px;font-size:18.5px;line-height:23px;transform:scaleX(0.9845);color:rgba(235,240,250,.48);font-weight:400;will-change:transform;">The Collection Book</span>
<!-- status bar view buttons -->
<svg style="left:1486px;top:823px" width="38" height="14" viewBox="0 0 38 14">
 <g fill="none" stroke="#9a8f8f" stroke-width=".8"><rect x=".5" y=".6" width="4" height="4"/><rect x=".5" y="4.6" width="4" height="4"/><rect x=".5" y="8.6" width="4" height="4"/></g>
 <g fill="#555"><rect x="2" y="2.2" width="1" height="1"/><rect x="2" y="6.2" width="1" height="1"/><rect x="2" y="10.2" width="1" height="1"/></g>
 <path d="M6.6,2.6 L10.2,2.6 M12.4,2.6 L16,2.6 M6.6,6.6 L10.2,6.6 M12.4,6.6 L16,6.6 M6.6,10.6 L10.2,10.6 M12.4,10.6 L16,10.6" stroke="#777" stroke-width="1.1"/>
 <rect x="23.6" y="1.6" width="13" height="10" fill="#fff" stroke="#8f8f8f" stroke-width=".9"/>
 <rect x="25.2" y="3.2" width="9.8" height="6.8" fill="url(#gSky)"/>
</svg>
<!-- watermark book -->
<svg style="left:1660px;top:1025px" width="80" height="55" viewBox="0 0 1571 1080">
 <path fill-rule="evenodd" fill="rgba(238,241,248,.66)" d="M640,215 L1120,245 Q1190,255 1165,320 L820,1010 Q790,1060 730,1035 L330,870 Q190,810 205,690 Q215,610 300,540 L560,250 Q595,212 640,215 Z
 M640,300 Q600,295 595,330 Q592,360 630,370 L890,425 Q930,432 940,395 Q948,360 910,352 Z
 M330,680 L740,790 Q760,795 775,775 L1045,410 Q1060,390 1085,395 Q1115,400 1100,430 L785,930 Q755,985 700,965 L360,835 Q300,810 290,760 Q280,700 330,680 Z"/>
</svg>
<div class=a style="left:1714.3px;top:1046.5px;width:2px;height:8px;background:rgba(235,240,250,.5)"></div>

</body></html>
